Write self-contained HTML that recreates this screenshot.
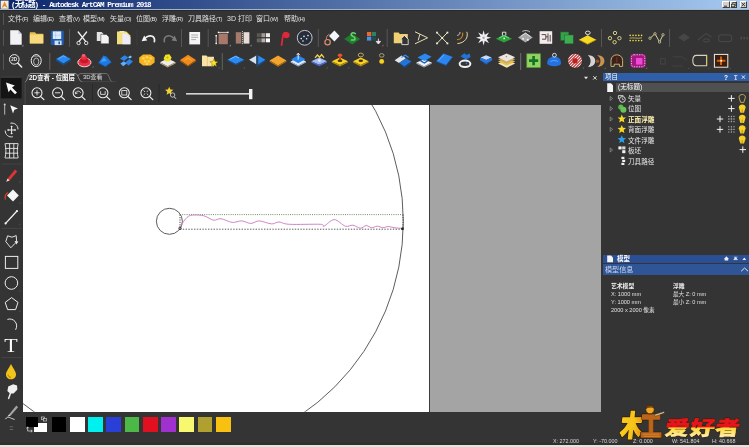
<!DOCTYPE html>
<html><head><meta charset="utf-8"><title>ArtCAM</title>
<style>
*{margin:0;padding:0;box-sizing:border-box}
html,body{width:749px;height:447px;overflow:hidden;background:#343434}
body{position:relative;filter:blur(0.4px);font-family:"Liberation Sans","Noto Sans CJK SC",sans-serif;color:#e8e8e8}
.a{position:absolute;white-space:nowrap}
.t{position:absolute;white-space:nowrap;line-height:1;transform-origin:0 0}
#ov{position:absolute;left:0;top:0;will-change:transform}
.t{will-change:transform}
</style></head>
<body>
<div class="a" style="left:0px;top:0px;width:749px;height:8.8px;background:linear-gradient(90deg,#0a246a 0%,#a6caf0 100%);"></div>
<div class="a" style="left:0px;top:8.7px;width:749px;height:1.2px;background:#a4b4c6;"></div>
<div class="a" style="left:0px;top:9.9px;width:749px;height:1.6px;background:linear-gradient(#1b2226,#2c3032);"></div>
<div class="a" style="left:722.4px;top:1.2px;width:7.4px;height:6.4px;background:#d4d0c8;border:0.5px solid #fff;border-right-color:#404040;border-bottom-color:#404040"></div>
<div class="a" style="left:730px;top:1.2px;width:7.4px;height:6.4px;background:#d4d0c8;border:0.5px solid #fff;border-right-color:#404040;border-bottom-color:#404040"></div>
<div class="a" style="left:739.6px;top:1.2px;width:7.4px;height:6.4px;background:#d4d0c8;border:0.5px solid #fff;border-right-color:#404040;border-bottom-color:#404040"></div>
<div class="a" style="left:2.5px;top:13px;width:1px;height:12px;background:#555;"></div>
<div class="a" style="left:2.5px;top:30px;width:1px;height:16px;background:#555;"></div>
<div class="a" style="left:2.5px;top:54px;width:1px;height:16px;background:#555;"></div>
<div class="a" style="left:22.9px;top:104.6px;width:406.2px;height:307.1px;background:#fff;"></div>
<div class="a" style="left:429.1px;top:104.6px;width:1px;height:307.1px;background:#3c3c3c;"></div>
<div class="a" style="left:430.1px;top:104.6px;width:171px;height:307.1px;background:#a4a4a4;"></div>
<div class="a" style="left:603px;top:72.6px;width:146px;height:8.4px;background:#2f5fa8;"></div>
<div class="a" style="left:615.5px;top:83.2px;width:133.5px;height:8.8px;background:#505050;"></div>
<div class="a" style="left:603px;top:255px;width:146px;height:7.8px;background:#2b4f94;"></div>
<div class="a" style="left:603px;top:264px;width:146px;height:11.2px;background:#2f5597;"></div>
<div class="a" style="left:26px;top:416.5px;width:12px;height:10px;background:#000;"></div>
<div class="a" style="left:34px;top:423px;width:12.5px;height:9px;background:#fff;"></div>
<div class="a" style="left:26px;top:416.5px;width:12px;height:10px;background:#000;"></div>
<div class="a" style="left:51.7px;top:416.7px;width:14.8px;height:15px;background:#000;"></div>
<div class="a" style="left:69.95px;top:416.7px;width:14.8px;height:15px;background:#fff;"></div>
<div class="a" style="left:88.2px;top:416.7px;width:14.8px;height:15px;background:#00f0f0;"></div>
<div class="a" style="left:106.45px;top:416.7px;width:14.8px;height:15px;background:#2a3fd8;"></div>
<div class="a" style="left:124.7px;top:416.7px;width:14.8px;height:15px;background:#4cb848;"></div>
<div class="a" style="left:142.95px;top:416.7px;width:14.8px;height:15px;background:#e01020;"></div>
<div class="a" style="left:161.2px;top:416.7px;width:14.8px;height:15px;background:#a030d0;"></div>
<div class="a" style="left:179.45px;top:416.7px;width:14.8px;height:15px;background:#f8f870;"></div>
<div class="a" style="left:197.7px;top:416.7px;width:14.8px;height:15px;background:#b0a030;"></div>
<div class="a" style="left:215.95px;top:416.7px;width:14.8px;height:15px;background:#f8c010;"></div>
<div class="a" style="left:0px;top:442px;width:749px;height:3px;background:#303030;"></div>
<div class="a" style="left:0px;top:445px;width:749px;height:2px;background:#e4e4de;"></div>
<svg id="ov" width="749" height="447" viewBox="0 0 749 447">
<clipPath id="cv"><rect x="22.9" y="104.6" width="406.2" height="307.1"/></clipPath>
<g clip-path="url(#cv)" fill="none">
<circle cx="169.5" cy="221.5" r="233.8" stroke="#333" stroke-width="0.8"/>
<circle cx="169.4" cy="221.3" r="13" stroke="#333" stroke-width="0.8"/>
<path d="M180,214.6H403" stroke="#6f9060" stroke-width="1" stroke-dasharray="1 1.2"/>
<path d="M180,214.6V229M403,214.6V229" stroke="#333" stroke-width="0.9" stroke-dasharray="1.2 1.2"/>
<path d="M180,229.2H403" stroke="#333" stroke-width="0.8" stroke-dasharray="1.4 1.4"/>
<path d="M179.9,228C180.5,226.9 182.2,223.4 183.6,221.5C185.0,219.6 186.6,217.5 188.3,216.4C190.0,215.3 191.2,215.1 193.9,215C196.6,214.9 200.9,215.0 204.2,215.9C207.5,216.8 210.8,219.7 213.6,220.2C216.4,220.7 217.9,218.3 221,218.7C224.1,219.1 228.8,222.0 232.2,222.4C235.6,222.8 238.5,220.7 241.6,220.9C244.7,221.1 247.9,223.4 250.9,223.4C253.9,223.4 255.9,220.8 259.3,220.9C262.7,221.0 268.2,223.7 271.5,223.9C274.8,224.1 276.0,221.9 279,222C282.0,222.1 282.4,223.9 289.3,224.3C296.2,224.7 314.4,224.0 320.2,224.3C326.0,224.6 321.7,227.0 324,226.2C326.3,225.4 330.6,219.6 334.2,219.6C337.8,219.6 342.3,225.3 345.4,226.2C348.5,227.1 350.4,224.9 352.9,225.2C355.4,225.5 358.2,228.1 360.4,228.2C362.6,228.3 364.1,225.7 366,225.6C367.9,225.5 369.7,227.6 371.6,227.7C373.5,227.8 375.3,226.2 377.2,226.2C379.1,226.2 380.9,227.6 382.8,227.7C384.7,227.8 386.5,226.5 388.4,226.5C390.3,226.5 391.7,227.4 394,227.7C396.3,228.0 401.0,228.3 402.4,228.4" stroke="#c878c0" stroke-width="0.9"/>
<circle cx="180" cy="228.3" r="1.3" stroke="#222" stroke-width="0.7"/>
<circle cx="402.5" cy="228.8" r="1.4" fill="#222"/>
</g>
<rect x="69.0" y="29" width="1" height="18" fill="#565656" />
<rect x="181.0" y="29" width="1" height="18" fill="#565656" />
<rect x="207.7" y="29" width="1" height="18" fill="#565656" />
<rect x="317.8" y="29" width="1" height="18" fill="#565656" />
<rect x="386.7" y="29" width="1" height="18" fill="#565656" />
<rect x="601.0" y="29" width="1" height="18" fill="#565656" />
<rect x="669.0" y="29" width="1" height="18" fill="#565656" />
<rect x="136.5" y="30" width="1" height="16" fill="#3c3c3c" />
<rect x="49.3" y="53" width="1" height="17" fill="#6a6058" />
<rect x="221.8" y="53" width="1" height="17" fill="#5a6a58" />
<rect x="520.2" y="53" width="1" height="17" fill="#707070" />
<path d="M10.2,30.3H18.3L21.7,34V44.8H10.2Z" fill="#f2f2f6"/>
<path d="M18.3,30.3L21.7,34H18.3Z" fill="#c8c8d4"/>
<path d="M21.5,46.5h2v-2z" fill="#888"/>
<path d="M29.8,32.2h5.2l1.3,1.6h7v9.6h-13.5z" fill="#e6bf52"/>
<rect x="29.8" y="34.6" width="13.5" height="8.8" fill="#f8da7e" />
<rect x="50.8" y="30.8" width="13" height="14.3" fill="#1f5cae" rx="0.8"/>
<rect x="52.8" y="31.4" width="8.4" height="7.6" fill="#dfeafc" />
<path d="M55.6,31.4V39M52.8,35.2H61.2" stroke="#9dbdf0" stroke-width="0.5" fill="none"/>
<rect x="54.6" y="40.6" width="7" height="4.5" fill="#cfe0fa" />
<rect x="58.4" y="41.6" width="1.6" height="2.6" fill="#1f5cae" />
<path d="M78.2,32L85.6,41.4M86.6,32L79.2,41.4" stroke="#f0f0f0" stroke-width="1.3" fill="none" stroke-linecap="round"/>
<circle cx="78.6" cy="43" r="1.7" fill="none" stroke="#f0f0f0" stroke-width="0.9"/>
<circle cx="86.2" cy="43" r="1.7" fill="none" stroke="#f0f0f0" stroke-width="0.9"/>
<path d="M96.8,32H101.6L103.4,33.8V41H96.8Z" fill="#e2e2e2"/>
<path d="M100.8,34.4H106.4L109,37V43.8H100.8Z" fill="#f4f4f4" stroke="#343434" stroke-width="0.5"/>
<path d="M117,31.6H126.4L130.4,35.6V44.2H117Z" fill="#f1de7c"/>
<path d="M122.4,33.6H126.6L130.4,37.4V44.2H122.4Z" fill="#ecebfa"/>
<rect x="119.5" y="31" width="5" height="1.6" fill="#f6e9a0" />
<path d="M154.4,41.6C155.4,36.6 150.6,34 146,37.4" stroke="#f4f4f4" stroke-width="1.7" fill="none" stroke-linecap="round"/>
<path d="M141.6,41.2L147.2,40.6L144.2,35.6Z" fill="#f4f4f4"/>
<path d="M164.4,41.6C163.4,36.6 168.2,34 172.8,37.4" stroke="#7c7c7c" stroke-width="1.6" fill="none" stroke-linecap="round"/>
<path d="M177.2,41.2L171.6,40.6L174.6,35.6Z" fill="#7c7c7c"/>
<rect x="189.3" y="32" width="10.8" height="12.4" fill="#f4f4f4" />
<path d="M191.2,35H198M191.2,37.3H198M191.2,39.6H196" stroke="#8a8a8a" stroke-width="0.7"/>
<rect x="218.6" y="33.6" width="9.2" height="10.6" fill="#a8796a" />
<path d="M218.4,32.4H228M216.2,35.6V43.6" stroke="#f0f0f0" stroke-width="0.8"/>
<rect x="217.8" y="31.7" width="1.4" height="1.4" fill="#fff" />
<rect x="227.2" y="31.7" width="1.4" height="1.4" fill="#fff" />
<rect x="215.5" y="35" width="1.4" height="1.4" fill="#fff" />
<rect x="215.5" y="42.8" width="1.4" height="1.4" fill="#fff" />
<path d="M229.2,46.3h1.8v-1.8z" fill="#8890a0"/>
<rect x="235.8" y="32.2" width="5.6" height="11.4" fill="#a47a6c" />
<rect x="243.6" y="32.2" width="5.8" height="11.4" fill="#e9dcd6" />
<path d="M242.5,31V45" stroke="#f0f0f0" stroke-width="0.7" stroke-dasharray="1.2 0.8"/>
<path d="M249.8,46.3h1.8v-1.8z" fill="#8890a0"/>
<rect x="256.8" y="33.2" width="4" height="3.9" fill="#5a5654" />
<rect x="256.8" y="38.4" width="4" height="3.9" fill="#6a6662" />
<rect x="261.40000000000003" y="33.2" width="4" height="3.9" fill="#a09a96" />
<rect x="261.40000000000003" y="38.4" width="4" height="3.9" fill="#b8b2ac" />
<rect x="266.0" y="33.2" width="4" height="3.9" fill="#eeeae6" />
<rect x="266.0" y="38.4" width="4" height="3.9" fill="#fbfbfb" />
<path d="M281.6,45C282.4,40 282.6,36.6 283.4,34.2C284.4,32 288.6,32.4 288.8,35C289,37.2 286.4,37.6 285,37" stroke="#e0283a" stroke-width="1.8" fill="none" stroke-linecap="round"/>
<path d="M283.4,33.2H287.6C289.8,33.4 289.6,37.4 287.2,37.4H284Z" fill="#e0283a"/>
<circle cx="304.7" cy="37.8" r="7.4" fill="#262e3c" stroke="#c6c8d0" stroke-width="1"/>
<circle cx="301.2" cy="38.6" r="0.8" fill="#e8ecf4"/>
<circle cx="304" cy="36.4" r="0.8" fill="#e8ecf4"/>
<circle cx="306.6" cy="38.8" r="0.8" fill="#e8ecf4"/>
<circle cx="308" cy="35.6" r="0.8" fill="#e8ecf4"/>
<circle cx="303" cy="41" r="0.8" fill="#e8ecf4"/>
<path d="M329,36L334.4,30.6L339.6,36L334.4,41.4Z" fill="#f2f6fa"/>
<circle cx="327.6" cy="42.2" r="2.7" fill="none" stroke="#e08e70" stroke-width="1.2"/>
<path d="M326.4,39.4C326,36.6 327.6,34.6 329.4,34.4" stroke="#e08e70" stroke-width="0.9" fill="none"/>
<path d="M344.2,38.9L352.2,33.4L360.2,38.9L352.2,44.4Z" fill="#1f7d2c"/>
<path d="M355.4,33.6C352,31.4 349.4,34.4 352.6,36.2C355.8,37.8 356.4,40.4 351.4,40" stroke="#6ad474" stroke-width="1.5" fill="none" stroke-linecap="round"/>
<rect x="367" y="32" width="4.2" height="4" fill="#e8682e" />
<rect x="371.8" y="32" width="4.2" height="4" fill="#2c8262" />
<rect x="367" y="36.6" width="4.2" height="4" fill="#4b92e2" />
<rect x="371.8" y="36.6" width="4.2" height="4" fill="#1f4c50" />
<path d="M378.4,38.6V43M376.2,41.4L378.4,44L380.6,41.4Z" stroke="#e8e8e8" stroke-width="0.9" fill="#e8e8e8"/>
<path d="M381.6,46.3h1.8v-1.8z" fill="#c06050"/>
<path d="M393.8,32.6h4.8l1.2,1.5h8v9.2h-14z" fill="#f0d070"/>
<path d="M400.6,39.2L404.4,35.4L408.2,39.2V44.6H401.8V39.2" fill="#343434" stroke="#f4f4f4" stroke-width="0.8"/>
<path d="M415,31.8L427.6,37.8L415,43.8M419.8,34.4L418.2,40.4" stroke="#e8e0b4" stroke-width="1" fill="none" stroke-linejoin="round"/>
<path d="M437,32.6L447.4,43.4M447.4,32.6L437,43.4" stroke="#ece6c0" stroke-width="1" fill="none"/>
<rect x="436.1" y="31.700000000000003" width="1.8" height="1.8" fill="#f4f0d0" />
<rect x="446.5" y="42.5" width="1.8" height="1.8" fill="#f4f0d0" />
<rect x="446.5" y="31.700000000000003" width="1.8" height="1.8" fill="#f4f0d0" />
<rect x="436.1" y="42.5" width="1.8" height="1.8" fill="#f4f0d0" />
<rect x="441.3" y="37.1" width="1.8" height="1.8" fill="#f4f0d0" />
<path d="M466.8,31.8C468.8,37.6 464.6,43 457.4,43.6" stroke="#e8d8a0" stroke-width="1" fill="none"/>
<path d="M462.6,32.6C463.6,36.4 461,39.4 457,39.8" stroke="#d08424" stroke-width="1.1" fill="none"/>
<path d="M460,32C460.2,33.8 459,35.2 457.2,35.4" stroke="#e8e0c0" stroke-width="0.9" fill="none"/>
<path d="M483.6,30.2L484.8,34.8L489.0,32.4L486.6,36.6L491.2,37.8L486.6,39.0L489.0,43.2L484.8,40.8L483.6,45.4L482.4,40.8L478.2,43.2L480.6,39.0L476.0,37.8L480.6,36.6L478.2,32.4L482.4,34.8Z" fill="#f2f0f2"/>
<circle cx="483.6" cy="37.8" r="1.2" fill="#a8a0a8"/>
<path d="M495.8,38.7L503.9,34.8L512,38.7L503.9,42.6Z" fill="#2aa23c"/>
<path d="M499,38L504,35.6L509,38" stroke="#8fe89a" stroke-width="0.8" fill="none"/>
<path d="M502.4,35.6V32.2H505.8V35.6" stroke="#e8f0e8" stroke-width="0.9" fill="none"/>
<circle cx="504.2" cy="38.4" r="0.9" fill="#e0ffe0"/>
<path d="M518,37.5L525.4,32.4L532.8,37.5L525.4,42.6Z" fill="#a8a8a8"/>
<path d="M520.6,36.6L525.4,33.2L530.4,36.6" stroke="#e4e4e4" stroke-width="1" fill="none"/>
<path d="M522.4,31.4C524.6,30 528,30.4 530,32" stroke="#d0d0d0" stroke-width="0.9" fill="none"/>
<circle cx="523" cy="38.8" r="1.1" fill="#e8e8e8"/>
<circle cx="527.8" cy="39.8" r="1.1" fill="#f0f0f0"/>
<rect x="539.6" y="31.2" width="12.6" height="12.6" fill="#f3ecec" />
<path d="M541.6,34.6H545.8V39.2H542M548,33.4V41.6M545.8,36.8H548M550.2,35V41.6" stroke="#5c4848" stroke-width="1" fill="none"/>
<rect x="560.6" y="32" width="8.2" height="8.4" fill="#35a047" stroke="#1c6a2c" stroke-width="0.5"/>
<rect x="564.6" y="35" width="8.6" height="8.8" fill="#3fae52" stroke="#1c6a2c" stroke-width="0.5"/>
<path d="M579,39.7L587.6,35.2L596.2,39.7L587.6,44.2Z" fill="#f8da22"/>
<path d="M579,39.7L587.6,44.2L596.2,39.7" stroke="#b89010" stroke-width="0.8" fill="none"/>
<ellipse cx="587.8" cy="32.8" rx="2.4" ry="1.7" fill="none" stroke="#ececec" stroke-width="0.9"/>
<path d="M587.8,34.6V37" stroke="#d8c890" stroke-width="0.7"/>
<circle cx="615" cy="33" r="1.7" fill="none" stroke="#e8da8a" stroke-width="0.9"/>
<circle cx="610" cy="38.2" r="1.7" fill="none" stroke="#e8da8a" stroke-width="0.9"/>
<circle cx="619.4" cy="38.2" r="1.7" fill="none" stroke="#e8da8a" stroke-width="0.9"/>
<circle cx="614.6" cy="42.2" r="1.7" fill="none" stroke="#e8da8a" stroke-width="0.9"/>
<circle cx="630.2" cy="35.4" r="0.8" fill="#f0dc50"/>
<circle cx="630.2" cy="40.6" r="0.8" fill="#f0dc50"/>
<circle cx="633.0500000000001" cy="35.4" r="0.8" fill="#f0dc50"/>
<circle cx="633.0500000000001" cy="40.6" r="0.8" fill="#f0dc50"/>
<circle cx="635.9000000000001" cy="35.4" r="0.8" fill="#f0dc50"/>
<circle cx="635.9000000000001" cy="40.6" r="0.8" fill="#f0dc50"/>
<circle cx="638.75" cy="35.4" r="0.8" fill="#f0dc50"/>
<circle cx="638.75" cy="40.6" r="0.8" fill="#f0dc50"/>
<circle cx="641.6" cy="35.4" r="0.8" fill="#f0dc50"/>
<circle cx="641.6" cy="40.6" r="0.8" fill="#f0dc50"/>
<path d="M629.6,38.2C633,37.2 637,39 642,37.8" stroke="#e8d860" stroke-width="0.7" fill="none"/>
<path d="M650,38.2L655,33.8L659.6,42L663,34.8" stroke="#e8e0b0" stroke-width="0.9" fill="none"/>
<circle cx="650" cy="38.2" r="1.2" fill="#343434" stroke="#e8e0a0" stroke-width="0.7"/>
<circle cx="655" cy="33.8" r="1.2" fill="#343434" stroke="#e8e0a0" stroke-width="0.7"/>
<circle cx="659.6" cy="42" r="1.2" fill="#343434" stroke="#e8e0a0" stroke-width="0.7"/>
<circle cx="663" cy="34.8" r="1.2" fill="#343434" stroke="#e8e0a0" stroke-width="0.7"/>
<path d="M678,37.5L684.0,33.4L690,37.5L684.0,41.6Z" fill="#464646"/>
<path d="M698,40L706,33.4L711.6,37" stroke="#474747" stroke-width="1.2" fill="none"/>
<ellipse cx="706.4" cy="40.4" rx="3.2" ry="1.6" fill="none" stroke="#4c4c4c" stroke-width="1"/>
<rect x="718.6" y="34.8" width="13" height="6.8" fill="none" stroke="#464646" stroke-width="1.2" rx="2.4"/>
<rect x="740.4" y="36.8" width="1.6" height="2.6" fill="#4a4a4a" />
<rect x="743.4" y="36.8" width="1.6" height="2.6" fill="#4a4a4a" />
<rect x="746.4" y="36.8" width="1.6" height="2.6" fill="#4a4a4a" />
<circle cx="14.3" cy="59.4" r="4.8" fill="none" stroke="#f0f0f0" stroke-width="1"/>
<path d="M17.8,63L21.6,67" stroke="#f0f0f0" stroke-width="1.5" stroke-linecap="round"/>
<text x="11.2" y="61.2" font-size="4.6" fill="#e8e8e8" font-family="Liberation Sans,sans-serif" font-weight="bold">2D</text>
<ellipse cx="36.2" cy="60.6" rx="5" ry="6" fill="none" stroke="#f0f0f0" stroke-width="1"/>
<ellipse cx="36.2" cy="61.6" rx="2.6" ry="3.6" fill="none" stroke="#d8d8d8" stroke-width="0.8"/>
<path d="M31.6,58C33,55.4 39.4,55.4 40.8,58" stroke="#d0d0d0" stroke-width="0.7" fill="none"/>
<path d="M56,59.099999999999994L63.4,54.8L70.8,59.099999999999994L63.4,63.4Z" fill="#2a8af2"/>
<path d="M56,59.1L63.4,63.4L70.8,59.1V60.8L63.4,65.2L56,60.8Z" fill="#17508e"/>
<path d="M58.6,58.6L63.4,56L66,57.4" stroke="#6cb6ff" stroke-width="0.8" fill="none"/>
<ellipse cx="84.4" cy="62.4" rx="6.6" ry="4.4" fill="#e8324a" stroke="#fbd0d4" stroke-width="1"/>
<ellipse cx="84.2" cy="60.4" rx="4.2" ry="2.8" fill="#c81828"/>
<ellipse cx="83.8" cy="57.6" rx="3" ry="2.2" fill="#ec3044"/>
<ellipse cx="83.6" cy="55.4" rx="1.8" ry="1.4" fill="#f86070"/>
<path d="M92,67.6h1.6v-1.6z" fill="#707880"/>
<path d="M98.4,63L103.4,55.4L106.4,56.4L111.6,62.2L105.4,66.8Z" fill="#1e78e0"/>
<path d="M100.6,62L104,57.2L107,61Z" fill="#3aa0ff"/>
<path d="M98.4,63L105.4,66.8L111.6,62.2" stroke="#134e98" stroke-width="1" fill="none"/>
<path d="M120,58.6L124.6,55.2L128.4,57.6L124,61Z" fill="#2a84ea"/>
<path d="M125,62.4L129.4,59L133,61.6L128.6,65.4Z" fill="#2a84ea"/>
<path d="M120.4,63.6L123.8,61.2L126.6,63.4L123.2,66.2Z" fill="#5ab0ff"/>
<path d="M128,57.2L130.4,55.6L132,57L129.8,58.6Z" fill="#7cc4ff"/>
<path d="M139.2,57.6L143,54.6H150.6L154.6,57.6V62.6L150.6,65.6H143L139.2,62.6Z" fill="#f6b420"/>
<circle cx="143.4" cy="58.2" r="1.3" fill="#fcd45a"/>
<circle cx="147" cy="57.2" r="1.3" fill="#fcd45a"/>
<circle cx="150.6" cy="58.2" r="1.3" fill="#fcd45a"/>
<circle cx="145.2" cy="61.4" r="1.3" fill="#fcd45a"/>
<circle cx="148.8" cy="61.4" r="1.3" fill="#fcd45a"/>
<circle cx="147" cy="64" r="1.3" fill="#fcd45a"/>
<path d="M160,62.2L167.6,58.6L175.6,62.2L167.6,66.2Z" fill="#ececec"/>
<path d="M160,62.2L167.6,66.2L175.6,62.2V63.4L167.6,67.4L160,63.4Z" fill="#b8a078"/>
<path d="M163.6,58.6L165.4,54.8L169.4,54.2L171.6,57.4L170,61.2L165.6,61.6Z" fill="#f2e224"/>
<circle cx="167.4" cy="57.6" r="1" fill="#c8b010"/>
<path d="M180,60.1L188.0,54.8L196,60.1L188.0,65.4Z" fill="#f08a1a"/>
<path d="M180,60.1L188,65.4L196,60.1V61.2L188,66.4L180,61.2Z" fill="#b86008"/>
<path d="M184.6,60.4L188.2,58L191.6,60.4" stroke="#ffb050" stroke-width="1" fill="none"/>
<path d="M202,55.4h4.4l1.2,1.4h6.4v9.4h-12z" fill="#f8e2a4"/>
<path d="M207.4,57V66" stroke="#d8b870" stroke-width="0.6"/>
<path d="M214.0,58.7L215.1,61.5L218.1,61.7L215.8,63.6L216.5,66.5L214.0,64.9L211.5,66.5L212.2,63.6L209.9,61.7L212.9,61.5Z" fill="#f8e424" stroke="#6a5a10" stroke-width="0.4"/>
<path d="M218,68.4h1.6v-1.6z" fill="#5060a0"/>
<path d="M227.4,59.7L235.8,55.4L244.2,59.7L235.8,64Z" fill="#2a8af2"/>
<path d="M227.4,59.7L235.8,64L244.2,59.7V60.9L235.8,65.2L227.4,60.9Z" fill="#17508e"/>
<path d="M229.6,59.4L235.4,56.4L239,58" stroke="#7cc0ff" stroke-width="0.9" fill="none"/>
<path d="M243.2,68.6h1.8v-1.8z" fill="#585858"/>
<path d="M249,59.8L256.2,55.6V64.2Z" fill="#d6e4f2"/>
<path d="M258.2,55.4L265.4,59.8L258.2,64.4Z" fill="#2a8af2"/>
<path d="M258.2,64.4L265.4,59.8V61.2L258.2,66Z" fill="#17508e"/>
<path d="M257.2,54.6V66.6" stroke="#1a60b0" stroke-width="0.8"/>
<path d="M269.6,60.5L278.0,55.4L286.4,60.5L278.0,65.6Z" fill="#f2a42c"/>
<path d="M269.6,60.5L278,65.6L286.4,60.5V61.7L278,66.8L269.6,61.7Z" fill="#b87410"/>
<path d="M290.6,61.4L298.2,57.6L306,61.4L298.2,65.4Z" fill="#e0ecfc"/>
<path d="M290.6,61.4L298.2,65.4L306,61.4V62.6L298.2,66.6L290.6,62.6Z" fill="#a8bcd8"/>
<path d="M291.2,59.2L298.29999999999995,55.2L305.4,59.2L298.29999999999995,63.2Z" fill="#2a86ee"/>
<path d="M298.2,53.4V59.6M296.6,55.2L298.2,53.2L299.8,55.2" stroke="#f4f8ff" stroke-width="0.9" fill="none"/>
<path d="M311.4,61.2L319.2,57.6L327,61.2L319.2,64.8Z" fill="#a4baf2"/>
<path d="M311.4,61.2L319.2,64.8L327,61.2V62.6L319.2,66.2L311.4,62.6Z" fill="#4c6cd0"/>
<path d="M315,57.8L317.4,55L319.6,57.2L321.6,54.6L324,57.6" stroke="#f0d448" stroke-width="1.3" fill="none"/>
<circle cx="319.4" cy="60.6" r="1.5" fill="#dfe8ff"/>
<path d="M326,68.6h1.8v-1.8z" fill="#585858"/>
<path d="M331.8,61.3L339.9,57.6L348,61.3L339.9,65Z" fill="#f8d222"/>
<path d="M331.8,61.3L339.9,65L348,61.3V62.6L339.9,66.4L331.8,62.6Z" fill="#b08c10"/>
<ellipse cx="340" cy="55.2" rx="2.2" ry="1.8" fill="#e4562a"/>
<rect x="339" y="56.4" width="2" height="3.6" fill="#d84a20" />
<ellipse cx="340" cy="60.8" rx="2.4" ry="1.2" fill="#5a3008"/>
<path d="M347.4,68.6h1.8v-1.8z" fill="#505878"/>
<path d="M353,61.3L360.8,57.6L368.6,61.3L360.8,65Z" fill="#f8d222"/>
<path d="M353,61.3L360.8,65L368.6,61.3V62.6L360.8,66.4L353,62.6Z" fill="#b08c10"/>
<ellipse cx="360.8" cy="55" rx="2.6" ry="1.9" fill="none" stroke="#c8b268" stroke-width="0.9"/>
<ellipse cx="360.8" cy="60.8" rx="2.2" ry="1.2" fill="#4a2c08"/>
<ellipse cx="381.7" cy="55.4" rx="2.3" ry="1.8" fill="none" stroke="#b8a878" stroke-width="0.9"/>
<circle cx="381.7" cy="61.4" r="2.4" fill="#f8d222"/>
<path d="M379.6,62.6C380.4,64.2 383,64.2 383.8,62.6" stroke="#c09010" stroke-width="0.7" fill="none"/>
<path d="M394.6,60.2L401.6,55.6L406,58.2L399,63Z" fill="#e4e6ea"/>
<path d="M399,63L406,58.2L411.4,61.4L404.4,66.4Z" fill="#2474d8"/>
<path d="M401.4,57.4L405.2,55.2L408.6,57.4" stroke="#3a90f0" stroke-width="1.2" fill="none"/>
<path d="M399,63L404.4,66.4L411.4,61.4V63L404.4,68Z" fill="#154a90"/>
<path d="M416.4,62.6L423.8,59.4L431.8,62.6L424,66.4Z" fill="#eef0f4"/>
<path d="M416.4,62.6L424,66.4L431.8,62.6V63.8L424,67.6L416.4,63.8Z" fill="#a0a8b8"/>
<path d="M417.4,57.4L425,53.6L431.6,56.8L424.4,61Z" fill="#2a8af2"/>
<path d="M420.6,60.8L424.4,63L427.8,60.6" stroke="#1f60b8" stroke-width="1.4" fill="none"/>
<path d="M436,61.4L443.4,53.4L452.8,57L446,65.4Z" fill="#2a86ee"/>
<path d="M438.6,60.6L443.8,55.2" stroke="#6cb8ff" stroke-width="0.8" fill="none"/>
<path d="M436,61.4L446,65.4L452.8,57" stroke="#164c94" stroke-width="0.8" fill="none"/>
<path d="M460.4,56.2L464.4,53.2L466.6,55L469.6,53.6L470.6,57L466,59.4Z" fill="#1f74dc"/>
<ellipse cx="465" cy="63.8" rx="5.4" ry="3.2" fill="none" stroke="#eef0f6" stroke-width="2"/>
<circle cx="466.4" cy="63.4" r="0.8" fill="#3080e0"/>
<path d="M480.6,57.6L486.1,55.2L491.6,57.6L486.1,60Z" fill="#c4dcf8"/>
<path d="M480,60.4L486,57.6L492.4,60.4L486,64.4Z" fill="none"/>
<path d="M479.8,60L486.2,63L492.4,60L486.2,64.8Z" fill="#1c5cc0"/>
<path d="M480.6,57.6L486.1,60L491.6,57.6L492.4,60L486.2,63.2L479.8,60Z" fill="#2a78e0"/>
<path d="M498,63.6L506.6,59.8L515.2,63.6L506.6,67.8Z" fill="#f0e4b8"/>
<path d="M498,61.4L506.6,57.6L515.2,61.4L506.6,65.6Z" fill="#e8c040"/>
<path d="M498,59.2L506.6,55.4L515.2,59.2L506.6,63.4Z" fill="#c8aa74"/>
<path d="M498,57.2L506.6,53.4L515.2,57.2L506.6,61.4Z" fill="#ece6e0"/>
<circle cx="506.4" cy="56.6" r="0.8" fill="#a09890"/>
<rect x="526.8" y="53.8" width="13.6" height="13.6" fill="#92d262" stroke="#5aa03a" stroke-width="0.7"/>
<path d="M533.6,56V65.2M529,60.6H538.2" stroke="#107424" stroke-width="2.6"/>
<path d="M547.2,63.6C547,58.4 550.6,56.8 554.2,56.8C558,56.8 561.2,58.6 561,63.6C560,67.2 548.4,67.2 547.2,63.6Z" fill="#2272e2"/>
<path d="M550.4,61.6C552.6,60.2 556,60.2 557.8,61.6" stroke="#6cb4ff" stroke-width="0.8" fill="none"/>
<circle cx="554.4" cy="55.2" r="1.9" fill="none" stroke="#e8ecf4" stroke-width="0.9"/>
<clipPath id="sc"><circle cx="575" cy="60.8" r="7"/></clipPath>
<circle cx="575" cy="60.8" r="7" fill="#b82c2c"/>
<g clip-path="url(#sc)">
<path d="M548.0,70L568.0,50" stroke="#f6e8e8" stroke-width="1.1"/>
<path d="M551.0,70L571.0,50" stroke="#f6e8e8" stroke-width="1.1"/>
<path d="M554.0,70L574.0,50" stroke="#f6e8e8" stroke-width="1.1"/>
<path d="M557.0,70L577.0,50" stroke="#f6e8e8" stroke-width="1.1"/>
<path d="M560.0,70L580.0,50" stroke="#f6e8e8" stroke-width="1.1"/>
<path d="M563.0,70L583.0,50" stroke="#f6e8e8" stroke-width="1.1"/>
<path d="M566.0,70L586.0,50" stroke="#f6e8e8" stroke-width="1.1"/>
<path d="M569.0,70L589.0,50" stroke="#f6e8e8" stroke-width="1.1"/>
<path d="M572.0,70L592.0,50" stroke="#f6e8e8" stroke-width="1.1"/>
<path d="M575.0,70L595.0,50" stroke="#f6e8e8" stroke-width="1.1"/>
<path d="M578.0,70L598.0,50" stroke="#f6e8e8" stroke-width="1.1"/>
<path d="M581.0,70L601.0,50" stroke="#f6e8e8" stroke-width="1.1"/>
<path d="M584.0,70L604.0,50" stroke="#f6e8e8" stroke-width="1.1"/>
</g>
<circle cx="575" cy="60.8" r="2.6" fill="#c02020"/>
<path d="M582.4,68.6h1.6v-1.6z" fill="#686868"/>
<path d="M588.2,55.4C591.4,58 591.4,64 588.2,66.6C594,66.4 596,62 594.6,58.2C596,62 592,55.6 588.2,55.4Z" fill="#d6d6d6"/>
<path d="M588,55.4C592.4,57.4 592.4,64.6 588,66.8C592.4,67.2 595.4,64 595.2,61C595.4,58 592.4,55 588,55.4Z" fill="#d4d4d4"/>
<path d="M599.4,55.4C603.8,57.4 603.8,64.6 599.4,66.8C603.8,67.2 606.8,64 606.6,61C606.8,58 603.8,55 599.4,55.4Z" fill="#c89252" transform="translate(-2.2,0)"/>
<circle cx="597.4" cy="61.2" r="1.8" fill="#a4521c"/>
<path d="M604,69h1.6v-1.6z" fill="#6a7080"/>
<path d="M611,66.4V60.4C611,53 622.6,53 622.6,60.4V66.4H619.4V64.2H614.2V66.4Z" fill="#3a2218" stroke="#c8b274" stroke-width="1"/>
<path d="M616.8,57V62.4" stroke="#a03030" stroke-width="0.8"/>
<rect x="630.4" y="53.8" width="15.4" height="14" fill="#a01a82" rx="3.4"/>
<rect x="631.4" y="54.8" width="13.4" height="12" fill="none" stroke="#e6b6d6" stroke-width="1" stroke-dasharray="1.4 1.1" rx="2.6"/>
<rect x="636" y="58" width="6.4" height="6.6" fill="#f246d4" />
<path d="M645.6,68.8h1.6v-1.6z" fill="#708070"/>
<rect x="660.6" y="58.6" width="4.6" height="5.4" fill="none" stroke="#444" stroke-width="1"/>
<path d="M672.6,56.8H681.6L686.6,60M672.6,66H682.8" stroke="#444" stroke-width="0.9" fill="none"/>
<path d="M687.6,69h1.6v-1.6z" fill="#555"/>
<path d="M707.8,69h1.6v-1.6z" fill="#555"/>
<path d="M729,69h1.6v-1.6z" fill="#555"/>
<path d="M706.6,55.4H696.4C691.6,55.4 691.6,65.8 696.4,65.8H706.6Z" fill="none" stroke="#d8d2bc" stroke-width="1.1"/>
<path d="M706.6,55.4V65.8" stroke="#d8c468" stroke-width="1.1"/>
<rect x="714.4" y="54.4" width="13.4" height="12.8" fill="#3c1e0e" stroke="#f0ece6" stroke-width="1"/>
<path d="M721,56.6V65M716.8,60.8H725.4" stroke="#d0620e" stroke-width="2"/>
<circle cx="721.2" cy="60.8" r="1" fill="#fff6e8"/>
<path d="M25.2,81.6C27.6,81.6 27.6,73.5 30.6,73.5H75.2C78.4,73.5 78.6,81.6 81.8,81.6" fill="#363636" stroke="#b4b4b4" stroke-width="0.7"/>
<path d="M78.2,76C79,73.8 79.6,73.6 81,73.6H106.4C109.2,73.6 109.4,81.6 112.2,81.6" fill="none" stroke="#8a8a8a" stroke-width="0.7"/>
<path d="M25.1,81.6V104.5" stroke="#505050" stroke-width="0.8"/>
<path d="M81.8,81.6H116" stroke="#505050" stroke-width="0.6"/>
<path d="M584,76.8h4l-2,2.4z" fill="#e8e8e8"/>
<path d="M593.2,76.2l3.4,3.4M596.6,76.2l-3.4,3.4" stroke="#ececec" stroke-width="0.9"/>
<circle cx="37" cy="92.8" r="5" fill="none" stroke="#f0f0f0" stroke-width="1.05"/>
<path d="M40.5,96.4L43.9,99.6" stroke="#f0f0f0" stroke-width="1.3" stroke-linecap="round"/>
<path d="M34.4,92.8H39.6M37,90.2V95.4" stroke="#f0f0f0" stroke-width="0.9"/>
<circle cx="57.6" cy="92.8" r="5" fill="none" stroke="#f0f0f0" stroke-width="1.05"/>
<path d="M61.1,96.4L64.5,99.6" stroke="#f0f0f0" stroke-width="1.3" stroke-linecap="round"/>
<path d="M55,92.8H60.2" stroke="#f0f0f0" stroke-width="0.9"/>
<circle cx="78.1" cy="92.8" r="5" fill="none" stroke="#f0f0f0" stroke-width="1.05"/>
<path d="M81.6,96.4L85.0,99.6" stroke="#f0f0f0" stroke-width="1.3" stroke-linecap="round"/>
<path d="M75.6,93.6C76,90.6 80,90.2 80.6,93M75.2,91.6L75.6,93.8L77.6,93" stroke="#f0f0f0" stroke-width="0.8" fill="none"/>
<rect x="92" y="84" width="0.8" height="18" fill="#262626" />
<circle cx="102.9" cy="92.8" r="5" fill="none" stroke="#f0f0f0" stroke-width="1.05"/>
<path d="M106.4,96.4L109.8,99.6" stroke="#f0f0f0" stroke-width="1.3" stroke-linecap="round"/>
<path d="M100.6,91.2V94.4H105.2V91.2" stroke="#f0f0f0" stroke-width="0.8" fill="none"/>
<circle cx="124.3" cy="92.8" r="5" fill="none" stroke="#f0f0f0" stroke-width="1.05"/>
<path d="M127.8,96.4L131.2,99.6" stroke="#f0f0f0" stroke-width="1.3" stroke-linecap="round"/>
<rect x="121.8" y="90.6" width="5" height="4.4" fill="none" stroke="#f0f0f0" stroke-width="0.8"/>
<circle cx="145.9" cy="92.8" r="5" fill="none" stroke="#f0f0f0" stroke-width="1.05"/>
<path d="M149.4,96.4L152.8,99.6" stroke="#f0f0f0" stroke-width="1.3" stroke-linecap="round"/>
<path d="M143.6,90.6L148.2,95M148.2,90.6L143.6,95" stroke="#f0f0f0" stroke-width="0.8"/>
<rect x="144.9" y="91.8" width="2" height="2" fill="#333" />
<rect x="158.6" y="84" width="0.8" height="18" fill="#262626" />
<path d="M169.2,86.8L170.4,89.6L173.4,89.8L171.1,91.8L171.8,94.8L169.2,93.2L166.6,94.8L167.3,91.8L165.0,89.8L168.0,89.6Z" fill="#f4d428"/>
<circle cx="172.6" cy="95" r="2.2" fill="#333" stroke="#f0f0f0" stroke-width="0.7"/>
<path d="M174.2,96.8L176,98.8" stroke="#f0f0f0" stroke-width="0.9"/>
<rect x="186" y="93.2" width="64" height="1.3" fill="#fafafa" />
<rect x="249" y="89" width="3.4" height="10.2" fill="#f4f4f4" />
<rect x="0.8" y="77.4" width="20.8" height="21" fill="#141414" />
<path d="M0.8,77.2H21.6" stroke="#585858" stroke-width="0.6"/>
<path d="M6,82.4L14.8,85.6L12,87.6L17,92.4L15,94.2L10.4,89.4L8.6,92.2Z" fill="#fafafa"/>
<path d="M4.7,105V114.6" stroke="#b8b8b8" stroke-width="1"/>
<circle cx="4.7" cy="104.4" r="1" fill="#d0d0d0"/>
<path d="M10.2,105.2L18,108.6L14.4,109.8L13,113.6Z" fill="#f4f4f4"/>
<path d="M11.6,126.2V133.8M7.8,130H15.4" stroke="#f0f0f0" stroke-width="1"/>
<path d="M11.6,125.4l-1.3,1.6h2.6zM11.6,134.6l-1.3,-1.6h2.6zM7,130l1.6,-1.3v2.6zM16.2,130l-1.6,-1.3v2.6z" fill="#f0f0f0"/>
<path d="M10.4,123.2C14.6,122.4 18,125.4 18,129.4M12.8,136.8C8.6,137.6 5.2,134.6 5.2,130.6" stroke="#e4e4e4" stroke-width="1" fill="none"/>
<path d="M5.2,143.6H18M5,148.4H18.2M5,153.2H18.2M5.2,158H18M5,143.6C6.2,148 6.2,153.6 5,158M9.6,143.6V158M13.8,143.6V158M18.2,143.6C17,148 17,153.6 18.2,158" stroke="#eaeaea" stroke-width="0.9" fill="none"/>
<path d="M1.5,164H21.5" stroke="#4c4c4c" stroke-width="0.7"/>
<path d="M7.6,178.6L15.2,169.6L17.2,171.4L9.6,180.4Z" fill="#e03434"/>
<path d="M6.2,181.8L7.6,178.6L9.6,180.4Z" fill="#f4e0d0"/>
<path d="M18.6,182.4h1.6v-1.6z" fill="#555"/>
<path d="M7,195.6L13,189.4L18.8,195.6L13,201.6Z" fill="#f6f6f6"/>
<path d="M5.4,199.6C4.4,196 6,193.2 8.2,192.6" stroke="#d0402c" stroke-width="1.3" fill="none"/>
<path d="M18.6,203.4h1.6v-1.6z" fill="#555"/>
<path d="M5.6,223.4L17,211" stroke="#f4f4f4" stroke-width="1.3"/>
<circle cx="5.6" cy="223.4" r="1.1" fill="#f4f4f4"/>
<circle cx="17" cy="211" r="1.1" fill="#f4f4f4"/>
<path d="M18.6,224.8h1.6v-1.6z" fill="#555"/>
<path d="M1.5,228.4H21.5" stroke="#4c4c4c" stroke-width="0.7"/>
<path d="M7.6,235.8L12,237.2L16.2,235.6L16.6,241.4M7.6,235.8L5.8,241.6L10.8,247.8L15.2,243.2" stroke="#eaeaea" stroke-width="0.95" fill="none"/>
<path d="M14.6,241L18.4,241.6L16.2,244.4Z" fill="#f4f4f4"/>
<rect x="5.4" y="256.4" width="12.4" height="12" fill="none" stroke="#ededed" stroke-width="1"/>
<circle cx="11.4" cy="283" r="6.3" fill="none" stroke="#ededed" stroke-width="1"/>
<path d="M18.8,291.6h1.6v-1.6z" fill="#555"/>
<path d="M11.6,297.6L18,302.4L15.6,309.6H7.6L5.2,302.4Z" fill="none" stroke="#ededed" stroke-width="1"/>
<path d="M18.8,312h1.6v-1.6z" fill="#555"/>
<path d="M7.4,319.4C13.4,317.4 19,323.4 15.6,329.8" stroke="#ededed" stroke-width="1" fill="none"/>
<text x="4.2" y="352.4" font-size="18" fill="#fafafa" font-family="Liberation Serif,serif" textLength="13.4" lengthAdjust="spacingAndGlyphs">T</text>
<path d="M1.5,357.6H21.5" stroke="#4c4c4c" stroke-width="0.7"/>
<path d="M11,364C8,369.6 6,372 6,374.4C6,377.4 8.2,379.2 11,379.2C13.8,379.2 16,377.4 16,374.4C16,372 14,369.6 11,364Z" fill="#f2c41a"/>
<path d="M8,374.6C8.2,376.4 9.6,377.4 11,377.4" stroke="#8a6a08" stroke-width="0.8" fill="none"/>
<path d="M8.2,386.4L13.2,384.2L17,385.6L17.4,389.6L13.6,393.4L10,393.6L7.4,391Z" fill="#f0f0f0"/>
<path d="M10.4,393.4L8.6,398.4" stroke="#e8e8e8" stroke-width="1.5" stroke-linecap="round"/>
<path d="M9,414.4L16.4,405.6L18,407.2L10.6,415.8Z" fill="#a4a4a4"/>
<path d="M5.4,419.2C8,415 10.2,418.6 14.6,419.4" stroke="#e4e4e4" stroke-width="0.9" fill="none"/>
<path d="M7.6,416.6L9,414.4L10.6,415.8Z" fill="#e8e8e8"/>
<rect x="9.6" y="426.4" width="3.6" height="0.8" fill="#707070" />
<rect x="9.6" y="429.2" width="3.6" height="0.8" fill="#707070" />
<rect x="41.6" y="417" width="3" height="2.4" fill="none" stroke="#e4e4e4" stroke-width="0.6"/>
<rect x="43.4" y="418.6" width="3" height="2.4" fill="#343434" stroke="#e4e4e4" stroke-width="0.6"/>
<path d="M27.6,427V431H32M26.6,428.4L27.6,426.8L28.8,428.4M30.8,429.8L32.4,431L30.8,432.2" stroke="#e4e4e4" stroke-width="0.7" fill="none"/>
<rect x="0.6" y="0.6" width="8" height="8.2" fill="#f4ecd8" />
<path d="M1.6,8L4.6,1.4L7.8,8L4.6,6Z" fill="#e08a28"/>
<path d="M724,6.2H727" stroke="#222" stroke-width="0.9"/>
<rect x="732.8" y="2.6" width="3.2" height="2.6" fill="none" stroke="#222" stroke-width="0.7"/>
<rect x="731.6" y="4.2" width="3.2" height="2.6" fill="#d4d0c8" stroke="#222" stroke-width="0.7"/>
<path d="M741.6,2.8L745,6.2M745,2.8L741.6,6.2" stroke="#222" stroke-width="0.9"/>
<path d="M734,75.6H737.4M735.7,75.6V79.4M734.6,79.4H736.8" stroke="#e8eefc" stroke-width="0.8" fill="none"/>
<path d="M741.8,75.4L745,78.8M745,75.4L741.8,78.8" stroke="#f0f4ff" stroke-width="0.9"/>
<path d="M607.2,83.2H611L613,85.2V92H607.2Z" fill="#f4f4f4"/>
<path d="M610.2,96.5L612.6,98.5L610.2,100.5Z" fill="none" stroke="#a8a8a8" stroke-width="0.6"/>
<path d="M610.2,106.6L612.6,108.6L610.2,110.6Z" fill="none" stroke="#a8a8a8" stroke-width="0.6"/>
<path d="M610.2,117.0L612.6,119.0L610.2,121.0Z" fill="none" stroke="#a8a8a8" stroke-width="0.6"/>
<path d="M610.2,127.4L612.6,129.4L610.2,131.4Z" fill="none" stroke="#a8a8a8" stroke-width="0.6"/>
<path d="M610.2,148.0L612.6,150.0L610.2,152.0Z" fill="none" stroke="#a8a8a8" stroke-width="0.6"/>
<circle cx="622.4" cy="99.4" r="2.9" fill="none" stroke="#eaeaea" stroke-width="0.9"/>
<path d="M618.4,99V95.6H623.4" stroke="#eaeaea" stroke-width="0.8" fill="none"/>
<path d="M622.4,97.6V99.6H624" stroke="#eaeaea" stroke-width="0.6" fill="none"/>
<circle cx="620.8" cy="107" r="2.6" fill="#58b848"/>
<circle cx="623.4" cy="109.8" r="3" fill="#66c456"/>
<path d="M621.8,114.6L623.0,117.4L626.0,117.6L623.7,119.6L624.4,122.6L621.8,121.0L619.2,122.6L619.9,119.6L617.6,117.6L620.6,117.4Z" fill="#f8d828"/>
<path d="M621.8,125.0L623.0,127.8L626.0,128.0L623.7,130.0L624.4,133.0L621.8,131.4L619.2,133.0L619.9,130.0L617.6,128.0L620.6,127.8Z" fill="#f8d828"/>
<path d="M621.8,135.2L623.0,138.0L626.0,138.2L623.7,140.2L624.4,143.2L621.8,141.6L619.2,143.2L619.9,140.2L617.6,138.2L620.6,138.0Z" fill="#2aa0ea"/>
<rect x="618.4" y="146.4" width="3.2" height="3" fill="#f2f2f2" />
<rect x="622.2" y="146.4" width="3.2" height="3" fill="#d8d8d8" />
<rect x="622.2" y="150.2" width="3.2" height="3" fill="#f2f2f2" />
<rect x="621.4" y="156.8" width="3" height="2.2" fill="#f0f0f0" />
<rect x="622.2" y="159.8" width="3" height="2.2" fill="#f0f0f0" />
<rect x="621.4" y="162.8" width="3" height="2.2" fill="#f0f0f0" />
<path d="M728.2,98.4H734.6M731.4,95.2V101.6" stroke="#f4f4f4" stroke-width="1"/>
<path d="M728.2,108.6H734.6M731.4,105.4V111.8" stroke="#f4f4f4" stroke-width="1"/>
<path d="M716.8,119.0H723.2M720.0,115.8V122.2" stroke="#f4f4f4" stroke-width="1"/>
<path d="M716.8,129.4H723.2M720.0,126.2V132.6" stroke="#f4f4f4" stroke-width="1"/>
<path d="M739.6,149.6H746.0M742.8,146.4V152.8" stroke="#f4f4f4" stroke-width="1"/>
<rect x="728.3" y="115.9" width="1" height="1" fill="#dcdcdc" />
<rect x="728.3" y="118.5" width="1" height="1" fill="#dcdcdc" />
<rect x="728.3" y="121.1" width="1" height="1" fill="#dcdcdc" />
<rect x="730.9" y="115.9" width="1" height="1" fill="#dcdcdc" />
<rect x="730.9" y="118.5" width="1" height="1" fill="#dcdcdc" />
<rect x="730.9" y="121.1" width="1" height="1" fill="#dcdcdc" />
<rect x="733.5" y="115.9" width="1" height="1" fill="#dcdcdc" />
<rect x="733.5" y="118.5" width="1" height="1" fill="#dcdcdc" />
<rect x="733.5" y="121.1" width="1" height="1" fill="#dcdcdc" />
<path d="M728.0,119.0H734.8M731.4,115.6V122.4" stroke="#8a8a8a" stroke-width="0.5"/>
<rect x="728.3" y="126.30000000000001" width="1" height="1" fill="#dcdcdc" />
<rect x="728.3" y="128.9" width="1" height="1" fill="#dcdcdc" />
<rect x="728.3" y="131.5" width="1" height="1" fill="#dcdcdc" />
<rect x="730.9" y="126.30000000000001" width="1" height="1" fill="#dcdcdc" />
<rect x="730.9" y="128.9" width="1" height="1" fill="#dcdcdc" />
<rect x="730.9" y="131.5" width="1" height="1" fill="#dcdcdc" />
<rect x="733.5" y="126.30000000000001" width="1" height="1" fill="#dcdcdc" />
<rect x="733.5" y="128.9" width="1" height="1" fill="#dcdcdc" />
<rect x="733.5" y="131.5" width="1" height="1" fill="#dcdcdc" />
<path d="M728.0,129.4H734.8M731.4,126.0V132.8" stroke="#8a8a8a" stroke-width="0.5"/>
<path d="M739.0,97.2C739.0,93.6 745.4,93.6 745.4,97.2L743.8,102.4H740.6L739.0,97.2Z" fill="none" stroke="#c8b060" stroke-width="0.9"/>
<path d="M738.8,107.6C738.8,103.6 745.6,103.6 745.6,107.6L744.0,112.8H740.4L738.8,107.6Z" fill="#f6cf28"/>
<path d="M742.2,109.4V112.8" stroke="#8a6c10" stroke-width="0.6"/>
<path d="M738.8,117.8C738.8,113.8 745.6,113.8 745.6,117.8L744.0,123.0H740.4L738.8,117.8Z" fill="#f6cf28"/>
<path d="M742.2,119.6V123.0" stroke="#8a6c10" stroke-width="0.6"/>
<path d="M738.8,128.2C738.8,124.2 745.6,124.2 745.6,128.2L744.0,133.4H740.4L738.8,128.2Z" fill="#f6cf28"/>
<path d="M742.2,130.0V133.4" stroke="#8a6c10" stroke-width="0.6"/>
<path d="M738.8,138.4C738.8,134.4 745.6,134.4 745.6,138.4L744.0,143.6H740.4L738.8,138.4Z" fill="#f6cf28"/>
<path d="M742.2,140.2V143.6" stroke="#8a6c10" stroke-width="0.6"/>
<path d="M607.2,255.6H611L613,257.4V262.2H607.2Z" fill="#f4f4f4"/>
<path d="M724.6,258.2L726.4,256.2L728.2,258.2V260.6H724.6Z" fill="#e8eefc"/>
<path d="M733.8,257.2H737.4M733.8,259.6H737.4L735.6,257.4Z" stroke="#e8eefc" stroke-width="0.7" fill="#e8eefc"/>
<path d="M742.4,260H746.2L744.3,257.4Z" fill="#e8eefc"/>
<path d="M741.2,271.2L744.6,268L748,271.2" stroke="#dfe8fa" stroke-width="1" fill="none"/>
<defs><linearGradient id="wg" x1="0" y1="0" x2="0" y2="1"><stop offset="0" stop-color="#e8141c"/><stop offset="0.5" stop-color="#e8141c"/><stop offset="0.56" stop-color="#ffd83a"/><stop offset="1" stop-color="#fffbe0"/></linearGradient><linearGradient id="wg2" x1="0" y1="0" x2="1" y2="0"><stop offset="0" stop-color="#f8cc20"/><stop offset="0.6" stop-color="#f6c41a"/><stop offset="1" stop-color="#e89010"/></linearGradient></defs>
<g font-family="Noto Sans CJK SC,sans-serif" font-weight="900" paint-order="stroke" stroke-linejoin="round">
<text transform="translate(619.8,435.8) skewX(-6) scale(0.73,0.99)" font-size="29" fill="#3a2208" stroke="#3a2208" stroke-width="3.6" letter-spacing="0">木</text>
<text transform="translate(619.8,435.8) skewX(-6) scale(0.73,0.99)" font-size="29" fill="url(#wg2)" stroke="#f6c41a" stroke-width="1.6" letter-spacing="0">木</text>
<text transform="translate(640.4,436.4) scale(0.73,0.93)" font-size="29" fill="#3a2208" stroke="#3a2208" stroke-width="3.2" letter-spacing="0">工</text>
<text transform="translate(640.4,436.4) scale(0.73,0.93)" font-size="29" fill="#b9651c" stroke="#b9651c" stroke-width="1.6" letter-spacing="0">工</text>
<text transform="translate(664,435.4) skewX(-9) scale(1.17,0.94)" font-size="21" fill="#3a2208" stroke="#3a2208" stroke-width="1.6" letter-spacing="0.5">爱好者</text>
<text transform="translate(664,435.4) skewX(-9) scale(1.17,0.94)" font-size="21" fill="url(#wg)" stroke="url(#wg)" stroke-width="0.5" letter-spacing="0.5">爱好者</text>
</g>
<circle cx="650" cy="409.6" r="4.3" fill="#f0a828" stroke="#3a2208" stroke-width="0.9"/>
<path d="M646,408.4C647,404.6 653.6,404.6 654.4,408C652,406.6 648.4,407 646,408.4Z" fill="#8a4a14" stroke="#3a2208" stroke-width="0.5"/>
<path d="M654.6,414.6L664,411.6L664.6,413L655.2,416.2Z" fill="#f0dcb0" stroke="#3a2208" stroke-width="0.5"/>
<path d="M643,434.2H659M643.6,436.4H659.6" stroke="#e09038" stroke-width="0.7"/>
</svg>
<div class="t" style="left:11.2px;top:1.9px;font-size:7.6px;color:#fff;font-weight:bold;font-family:'Liberation Mono','Noto Sans CJK SC',monospace;letter-spacing:-0.93px">(无标题) - Autodesk ArtCAM Premium 2018</div>
<div class="t" style="left:7.7px;top:15.2px;font-size:7px;color:#e0e0e0;">文件<span style="font-size:5.8px;letter-spacing:-0.45px">(F)</span></div>
<div class="t" style="left:32.7px;top:15.2px;font-size:7px;color:#e0e0e0;">编辑<span style="font-size:5.8px;letter-spacing:-0.45px">(E)</span></div>
<div class="t" style="left:58.800000000000004px;top:15.2px;font-size:7px;color:#e0e0e0;">查看<span style="font-size:5.8px;letter-spacing:-0.45px">(V)</span></div>
<div class="t" style="left:83.0px;top:15.2px;font-size:7px;color:#e0e0e0;">模型<span style="font-size:5.8px;letter-spacing:-0.45px">(M)</span></div>
<div class="t" style="left:110.2px;top:15.2px;font-size:7px;color:#e0e0e0;">矢量<span style="font-size:5.8px;letter-spacing:-0.45px">(O)</span></div>
<div class="t" style="left:136.2px;top:15.2px;font-size:7px;color:#e0e0e0;">位图<span style="font-size:5.8px;letter-spacing:-0.45px">(B)</span></div>
<div class="t" style="left:162.2px;top:15.2px;font-size:7px;color:#e0e0e0;">浮雕<span style="font-size:5.8px;letter-spacing:-0.45px">(R)</span></div>
<div class="t" style="left:188.2px;top:15.2px;font-size:7px;color:#e0e0e0;">刀具路径<span style="font-size:5.8px;letter-spacing:-0.45px">(T)</span></div>
<div class="t" style="left:227.2px;top:15.2px;font-size:7px;color:#e0e0e0;">3D 打印<span style="font-size:5.8px;letter-spacing:-0.45px"></span></div>
<div class="t" style="left:255.7px;top:15.2px;font-size:7px;color:#e0e0e0;">窗口<span style="font-size:5.8px;letter-spacing:-0.45px">(W)</span></div>
<div class="t" style="left:283.59999999999997px;top:15.2px;font-size:7px;color:#e0e0e0;">帮助<span style="font-size:5.8px;letter-spacing:-0.45px">(H)</span></div>
<div class="t" style="left:29.4px;top:74.8px;font-size:6.4px;color:#fff;font-weight:bold">2D查看 - 位图层</div>
<div class="t" style="left:82.6px;top:75px;font-size:5.9px;color:#e0e0e0;">3D查看</div>
<div class="t" style="left:605px;top:74.2px;font-size:6.4px;color:#fff;">项目</div>
<div class="t" style="left:723.6px;top:74.6px;font-size:6.5px;color:#fff;font-weight:bold">?</div>
<div class="t" style="left:617.8px;top:84.3px;font-size:6.6px;color:#fff;">(无标题)</div>
<div class="t" style="left:628.3px;top:96.1px;font-size:6.6px;color:#e8e8e8;">矢量</div>
<div class="t" style="left:628.3px;top:106.4px;font-size:6.6px;color:#e8e8e8;">位图</div>
<div class="t" style="left:628.3px;top:116.8px;font-size:6.6px;color:#fff3b0;font-weight:bold">正面浮雕</div>
<div class="t" style="left:628.3px;top:127.2px;font-size:6.6px;color:#e8e8e8;">背面浮雕</div>
<div class="t" style="left:628.3px;top:137.5px;font-size:6.6px;color:#e8e8e8;">文件浮雕</div>
<div class="t" style="left:628.3px;top:147.9px;font-size:6.6px;color:#e8e8e8;">板坯</div>
<div class="t" style="left:628.3px;top:158.5px;font-size:6.6px;color:#e8e8e8;">刀具路径</div>
<div class="t" style="left:617px;top:255.6px;font-size:6.5px;color:#fff;font-weight:bold">模型</div>
<div class="t" style="left:605px;top:266.8px;font-size:7.1px;color:#c9d6ee;">模型信息</div>
<div class="t" style="left:611.4px;top:284.4px;font-size:5.8px;color:#f0f0f0;font-weight:bold">艺术模型</div>
<div class="t" style="left:611.4px;top:292px;font-size:5.6px;color:#e0e0e0;">X: 1000 mm</div>
<div class="t" style="left:611.4px;top:299.6px;font-size:5.6px;color:#e0e0e0;">Y: 1000 mm</div>
<div class="t" style="left:611.4px;top:307.6px;font-size:5.6px;color:#e0e0e0;">2000 x 2000 像素</div>
<div class="t" style="left:673.4px;top:284.4px;font-size:5.8px;color:#f0f0f0;font-weight:bold">浮雕</div>
<div class="t" style="left:673.4px;top:292px;font-size:5.6px;color:#e0e0e0;">最大 Z: 0 mm</div>
<div class="t" style="left:673.4px;top:299.6px;font-size:5.6px;color:#e0e0e0;">最小 Z: 0 mm</div>
<div class="t" style="left:553.3px;top:438.6px;font-size:5.4px;color:#d8d8d8;">X: 272.000</div>
<div class="t" style="left:593.3px;top:438.6px;font-size:5.4px;color:#d8d8d8;">Y: -70.000</div>
<div class="t" style="left:633px;top:438.6px;font-size:5.4px;color:#d8d8d8;">Z: 0.000</div>
<div class="t" style="left:672px;top:438.6px;font-size:5.4px;color:#d8d8d8;">W: 541.804</div>
<div class="t" style="left:712px;top:438.6px;font-size:5.4px;color:#d8d8d8;">H: 40.668</div>
</body></html>
